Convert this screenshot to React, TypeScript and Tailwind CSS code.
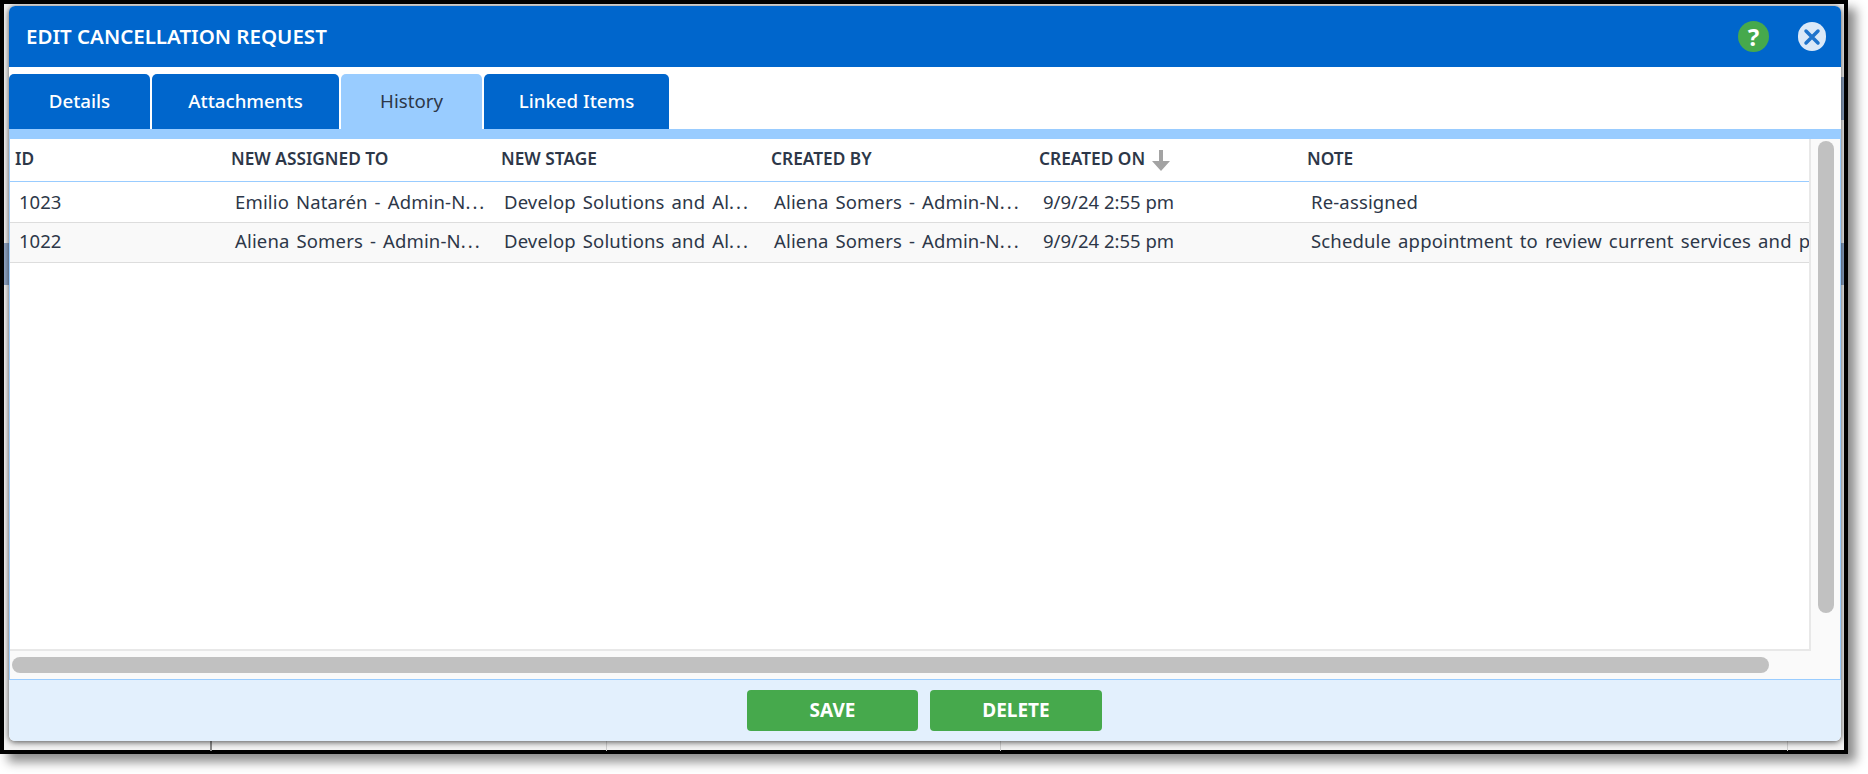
const tabs = [
  { label: "Details", width: "w-[141px]", active: false },
  { label: "Attachments", width: "w-[187px]", active: false },
  { label: "History", width: "w-[141px]", active: true },
  { label: "Linked Items", width: "w-[185px]", active: false },
];

const rows = [
  {
    id: "1023",
    assigned: "Emilio Natarén - Admin-N",
    stage: "Develop Solutions and Al",
    createdBy: "Aliena Somers - Admin-N",
    createdOn: "9/9/24 2:55 pm",
    note: "Re-assigned",
  },
  {
    id: "1022",
    assigned: "Aliena Somers - Admin-N",
    stage: "Develop Solutions and Al",
    createdBy: "Aliena Somers - Admin-N",
    createdOn: "9/9/24 2:55 pm",
    note: "Schedule appointment to review current services and pricing",
  },
];

const Dots = () => <span className="tracking-[2px]">...</span>;

const App = () => {
  return (
    <div className="h-[774px] w-[1868px] overflow-hidden bg-white font-['Noto_Sans',sans-serif]">
      <div className="relative h-[754px] w-[1848px] border-4 border-black bg-[#f2f2f2] pl-[5px] pt-[2px] shadow-[8px_8px_10px_rgba(0,0,0,0.45)]">
        {/* page behind the dialog, only slivers of it show */}
        <div className="absolute left-0 top-[239px] h-[42px] w-full bg-[#8fa6c6]" />
        <div className="absolute right-0 top-[73px] h-[43px] w-[5px] bg-[#8fa6c6]" />
        <div className="absolute left-[206px] top-[735px] h-[12px] w-[2px] bg-[#8a8a8a]" />
        <div className="absolute left-[602px] top-[735px] h-[12px] w-[1px] bg-[#cfcfcf]" />
        <div className="absolute left-[996px] top-[735px] h-[12px] w-[1px] bg-[#cfcfcf]" />
        <div className="absolute left-[1783px] top-[735px] h-[12px] w-[1px] bg-[#cfcfcf]" />

        <div className="relative flex h-[735px] w-[1832px] flex-col overflow-hidden rounded-[6px] bg-white shadow-[0_1px_6px_rgba(0,0,0,0.7)]">
          <div className="flex h-[61px] shrink-0 items-center bg-[#0066cc] pl-[17px] pr-[15px]">
            <h1 className="flex-1 text-[20.5px] font-semibold text-white">EDIT CANCELLATION REQUEST</h1>
            <div className="flex h-[31px] w-[31px] items-center justify-center rounded-full bg-[#46a94c] text-[24px] font-bold text-white">?</div>
            <div className="ml-[29px] flex h-[29px] w-[28px] items-center justify-center rounded-full bg-[#dbe9f8]">
              <svg width="20" height="20" viewBox="0 0 20 20">
                <path d="M4 4 L16 16 M16 4 L4 16" stroke="#1f74cc" strokeWidth="3.5" strokeLinecap="round" />
              </svg>
            </div>
          </div>

          <div className="flex h-[62px] shrink-0 items-end gap-[2px] bg-white">
            {tabs.map((tab) => (
              <div
                key={tab.label}
                className={
                  tab.active
                    ? `${tab.width} flex h-[55px] items-center justify-center rounded-t-[5px] bg-[#99ccff] text-[18.7px] text-[#2d3748]`
                    : `${tab.width} flex h-[55px] items-center justify-center rounded-t-[5px] bg-[#0066cc] text-[18.7px] font-medium text-white`
                }
              >
                {tab.label}
              </div>
            ))}
          </div>
          <div className="h-[10px] shrink-0 bg-[#99ccff]" />

          <div className="flex h-[540px] shrink-0 flex-col border-x border-[#99ccff] bg-[#fafafa]">
            <div className="flex h-[512px] shrink-0">
              <div className="min-w-0 flex-1 overflow-hidden border-b-2 border-r-2 border-[#e8e8e8] bg-white">
                <div className="flex h-[43px] items-center border-b border-[#99ccff] pb-[2px] text-[17.3px] font-semibold text-[#2d3748]">
                  <div className="w-[221px] shrink-0 pl-[5px]">ID</div>
                  <div className="w-[270px] shrink-0">NEW ASSIGNED TO</div>
                  <div className="w-[270px] shrink-0">NEW STAGE</div>
                  <div className="w-[268px] shrink-0">CREATED BY</div>
                  <div className="flex w-[268px] shrink-0 items-center gap-[7px]">
                    CREATED ON
                    <svg width="18" height="21" viewBox="0 0 18 21" className="mt-[2px]">
                      <path d="M7 0 H11 V11 H18 L9 21 L0 11 H7 Z" fill="#a3a3a3" />
                    </svg>
                  </div>
                  <div className="flex-1">NOTE</div>
                </div>
                {rows.map((row, i) => (
                  <div
                    key={row.id}
                    className={
                      i % 2 === 0
                        ? "flex h-[41px] items-center border-b border-[#dddddd] bg-white text-[18.5px] text-[#2d3748]"
                        : "flex h-[40px] items-center border-b border-[#dddddd] bg-[#f9f9f9] pb-[3px] text-[18.5px] text-[#2d3748]"
                    }
                  >
                    <div className="w-[221px] shrink-0 pl-[9px]">{row.id}</div>
                    <div className="w-[270px] shrink-0 whitespace-nowrap pl-[4px] tracking-[0.15px] [word-spacing:2px]">{row.assigned}<Dots /></div>
                    <div className="w-[270px] shrink-0 whitespace-nowrap pl-[3px] tracking-[0.15px] [word-spacing:2px]">{row.stage}<Dots /></div>
                    <div className="w-[268px] shrink-0 whitespace-nowrap pl-[3px] tracking-[0.15px] [word-spacing:2px]">{row.createdBy}<Dots /></div>
                    <div className="w-[268px] shrink-0 pl-[4px]">{row.createdOn}</div>
                    <div className="min-w-0 flex-1 overflow-hidden whitespace-nowrap pl-[4px] tracking-[0.15px] [word-spacing:2px]">{row.note}</div>
                  </div>
                ))}
              </div>
              <div className="w-[29px] shrink-0 pl-[7px] pt-[2px]">
                <div className="h-[472px] w-[16px] rounded-full bg-[#c1c1c1]" />
              </div>
            </div>
            <div className="flex flex-1 items-start pl-[2px] pt-[6px]">
              <div className="h-[16px] w-[1757px] rounded-full bg-[#c1c1c1]" />
            </div>
          </div>

          <div className="flex flex-1 items-center justify-center gap-[12px] border-t border-[#99ccff] bg-[#e3f0fd] pr-[1px]">
            <button className="h-[41px] w-[171px] rounded-[4px] bg-[#46a94c] text-[19px] font-bold text-white">SAVE</button>
            <button className="h-[41px] w-[172px] rounded-[4px] bg-[#46a94c] text-[19px] font-bold text-white">DELETE</button>
          </div>
        </div>
      </div>
    </div>
  );
};

export default App;
